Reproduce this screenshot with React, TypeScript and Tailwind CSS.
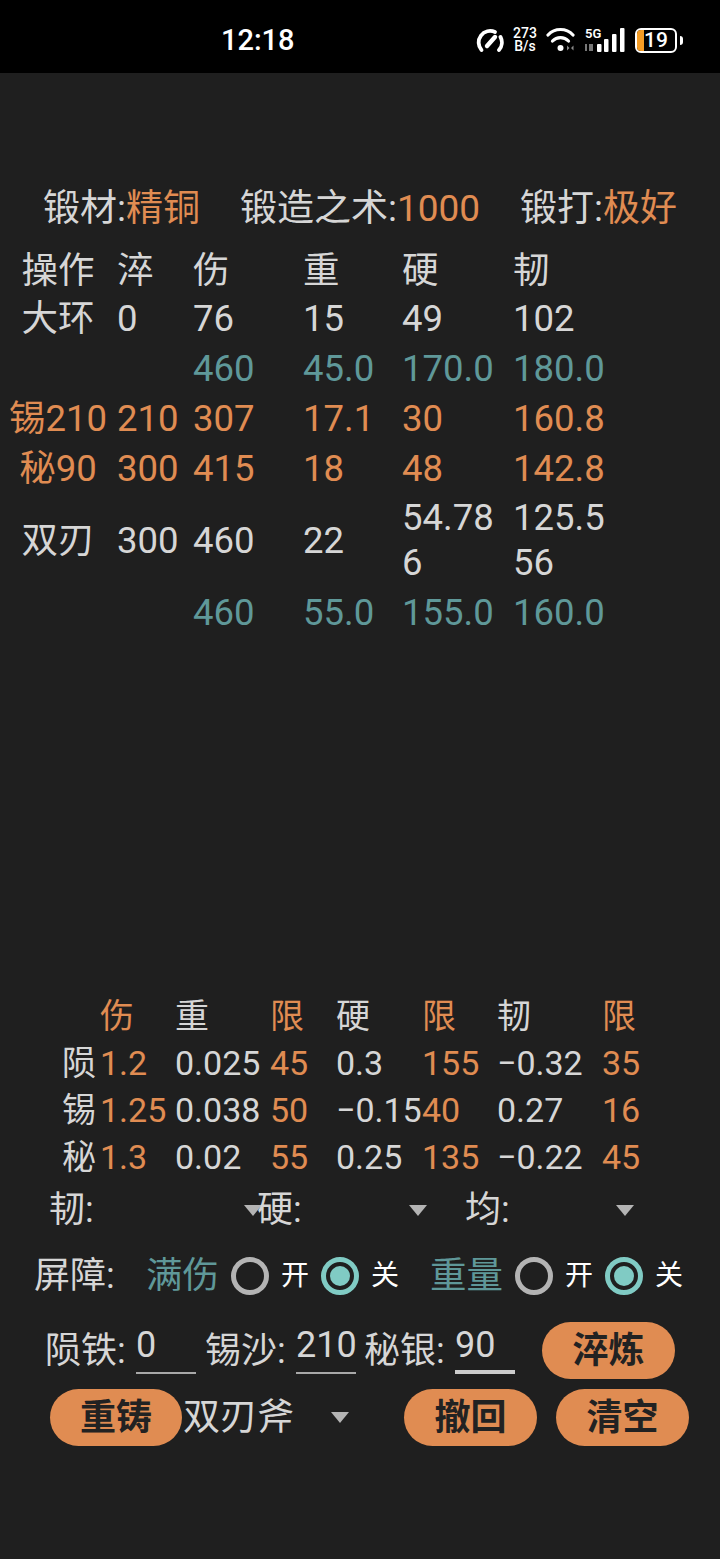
import React from 'react';

const FONT = "font-['Roboto','Noto_Sans_CJK_SC',sans-serif]";
const ORANGE = 'text-[#e08c52]';
const TEAL = 'text-[#5f9899]';

type Row = { cells: string[]; tone: string; h: string };

const forgeRows: Row[] = [
    { cells: ['操作', '淬', '伤', '重', '硬', '韧'], tone: 'text-[#d6d6d6]', h: 'h-[48px]' },
    { cells: ['大环', '0', '76', '15', '49', '102'], tone: 'text-[#d6d6d6]', h: 'h-[49px]' },
    { cells: ['', '', '460', '45.0', '170.0', '180.0'], tone: TEAL, h: 'h-[50px]' },
    { cells: ['锡210', '210', '307', '17.1', '30', '160.8'], tone: ORANGE, h: 'h-[50px]' },
    { cells: ['秘90', '300', '415', '18', '48', '142.8'], tone: ORANGE, h: 'h-[50px]' },
    { cells: ['双刃', '300', '460', '22', '54.786', '125.556'], tone: 'text-[#d6d6d6]', h: 'h-[94px]' },
    { cells: ['', '', '460', '55.0', '155.0', '160.0'], tone: TEAL, h: 'h-[50px]' },
];

const metals = [
    ['', '伤', '重', '限', '硬', '限', '韧', '限'],
    ['陨', '1.2', '0.025', '45', '0.3', '155', '−0.32', '35'],
    ['锡', '1.25', '0.038', '50', '−0.15', '40', '0.27', '16'],
    ['秘', '1.3', '0.02', '55', '0.25', '135', '−0.22', '45'],
];

const Caret = () => (
    <svg width="18" height="11" viewBox="0 0 18 11" className="shrink-0">
        <polygon points="0,0 18,0 9,11" fill="#b4b4b4" />
    </svg>
);

const Radio = ({ on }: { on?: boolean }) => (
    <span className={`flex h-[38px] w-[38px] shrink-0 items-center justify-center rounded-full border-[5px] ${on ? 'border-[#80cbc4]' : 'border-[#b4b4b4]'}`}>
        {on && <span className="h-[20px] w-[20px] shrink-0 rounded-full bg-[#80cbc4]" />}
    </span>
);

const Shield = ({ label, ml }: { label: string; ml: string }) => (
    <div className={`flex items-center ${ml}`}>
        <span className={`${TEAL} mr-[12px] text-[36.5px]`}>{label}</span>
        <Radio />
        <span className="ml-[12px] mr-[12px] text-[28px] text-white">开</span>
        <Radio on />
        <span className="ml-[12px] text-[28px] text-white">关</span>
    </div>
);

const PillButton = ({ label, className = '' }: { label: string; className?: string }) => (
    <button className={`flex h-[57px] w-[133px] shrink-0 items-center justify-center rounded-full bg-[#e08c52] text-[36px] font-bold text-[#222222] ${className}`}>
        {label}
    </button>
);

const Field = ({ label, value, thick, className = '' }: { label: string; value: string; thick?: boolean; className?: string }) => (
    <div className={`flex items-center ${className}`}>
        <span className="w-[91px] shrink-0 text-[36px]">{label}</span>
        <span className={`h-[47px] w-[60px] shrink-0 text-[36px] leading-[36px] ${thick ? 'border-b-[4px] border-[#cccccc]' : 'border-b-2 border-[#a8a8a8]'}`}>
            {value}
        </span>
    </div>
);

const StatusIcons = () => (
    <div className="flex items-center text-white">
        <svg width="28" height="25" viewBox="0 0 28 25" fill="none" stroke="white" strokeWidth="3.8" strokeLinecap="round">
            <path d="M5.5 22 A11.5 11.5 0 0 1 19 4" />
            <path d="M24.5 9 A11.5 11.5 0 0 1 23 22" />
            <path d="M11 18 L19 9" strokeWidth="4.4" />
        </svg>
        <div className="ml-[8px] flex w-[26px] flex-col items-center text-[14px] font-medium leading-[13px]">
            <span>273</span>
            <span>B/s</span>
        </div>
        <svg width="30" height="26" viewBox="0 0 30 26" fill="none" stroke="white" strokeWidth="3.2" strokeLinecap="round" className="ml-[8px]">
            <path d="M2 8 A17 17 0 0 1 27 8" />
            <path d="M6.5 14 A11 11 0 0 1 22.5 14" />
            <circle cx="14.5" cy="21" r="3" fill="white" stroke="none" />
            <path d="M23.5 21 l-2.5 -2.5 v5 z M25 21 l2.5 -2.5 v5 z" fill="#8a8a8a" stroke="none" />
        </svg>
        <div className="relative ml-[9px] h-[26px] w-[42px]">
            <span className="absolute left-0 top-0 text-[13px] font-semibold leading-[14px]">5G</span>
            <svg width="42" height="26" viewBox="0 0 42 26" className="absolute left-0 top-0">
                <rect x="0" y="17" width="2" height="7" fill="#777" />
                <rect x="4" y="17" width="4" height="7" fill="#777" />
                <rect x="12" y="17" width="4.5" height="8" rx="1" fill="white" />
                <rect x="19" y="12" width="4.5" height="13" rx="1" fill="white" />
                <rect x="27" y="7" width="4.5" height="18" rx="1" fill="white" />
                <rect x="35" y="1" width="4.5" height="24" rx="1" fill="white" />
            </svg>
        </div>
        <div className="ml-[8px] flex items-center">
            <div className="relative flex h-[25px] w-[42px] items-center justify-center overflow-hidden rounded-[6px] border-2 border-white">
                <span className="absolute bottom-0 left-0 top-0 w-[7px] bg-[#f39c25]" />
                <span className="relative text-[21px] font-medium leading-none">19</span>
            </div>
            <span className="ml-[3px] h-[9px] w-[3px] rounded-r-sm bg-white" />
        </div>
    </div>
);

export default function App() {
    return (
        <div className={`${FONT} min-h-[1559px] w-[720px] bg-[#1f1f1f] text-[#d6d6d6]`}>
            <header className="flex h-[73px] items-center bg-black pl-[221px] pr-[37px] pt-[7px]">
                <span className="mt-[2px] text-[29px] font-medium text-white">12:18</span>
                <div className="ml-auto">
                    <StatusIcons />
                </div>
            </header>

            <main className="flex flex-col">
                <div className="mt-[111px] flex h-[50px] items-center pl-[43px] text-[37px]">
                    <span className="w-[197px]">锻材:<span className={ORANGE}>精铜</span></span>
                    <span className="w-[280px]">锻造之术:<span className={ORANGE}>1000</span></span>
                    <span>锻打:<span className={ORANGE}>极好</span></span>
                </div>

                <div className="mt-[12px] flex flex-col pl-[9px] text-[36.5px] leading-[45px]">
                    {forgeRows.map((row, i) => (
                        <div key={i} className={`grid ${row.h} grid-cols-[108px_76px_110px_99px_111px_100px] items-center ${row.tone}`}>
                            {row.cells.map((cell, j) => (
                                <span key={j} className={j === 0 ? 'whitespace-nowrap pr-[10px] text-center' : j === 4 ? 'break-all pr-[8px]' : 'break-all'}>
                                    {cell}
                                </span>
                            ))}
                        </div>
                    ))}
                </div>

                <div className="mt-[354px] flex flex-col pl-[62px] text-[34px]">
                    {metals.map((row, i) => (
                        <div key={i} className="grid h-[47px] grid-cols-[38px_75px_95px_66px_86px_75px_105px_40px] items-center">
                            {row.map((cell, j) => (
                                <span key={j} className={`whitespace-nowrap ${j === 1 || j === 3 || j === 5 || j === 7 ? ORANGE : ''}`}>
                                    {cell}
                                </span>
                            ))}
                        </div>
                    ))}
                </div>

                <div className="mt-[6px] flex h-[50px] items-center pl-[49px] text-[36px]">
                    <div className="flex w-[208px] items-center">
                        <span>韧:</span>
                        <span className="ml-auto mr-[-5px]"><Caret /></span>
                    </div>
                    <div className="flex w-[208px] items-center">
                        <span>硬:</span>
                        <span className="ml-auto mr-[38px]"><Caret /></span>
                    </div>
                    <div className="flex w-[208px] items-center">
                        <span>均:</span>
                        <span className="ml-auto mr-[39px]"><Caret /></span>
                    </div>
                </div>

                <div className="mt-[16px] flex h-[50px] items-center pl-[34px]">
                    <span className="w-[112px] text-[36px]">屏障:</span>
                    <Shield label="满伤" ml="" />
                    <Shield label="重量" ml="ml-[31px]" />
                </div>

                <div className="mt-[21px] flex h-[57px] items-center pl-[45px]">
                    <Field label="陨铁:" value="0" />
                    <Field label="锡沙:" value="210" className="ml-[9px]" />
                    <Field label="秘银:" value="90" thick className="ml-[8px]" />
                    <PillButton label="淬炼" className="ml-[27px]" />
                </div>

                <div className="mt-[10px] flex h-[57px] items-center pl-[50px]">
                    <PillButton label="重铸" className="!w-[132px]" />
                    <span className="ml-[1px] w-[148px] text-[37px]">双刃斧</span>
                    <Caret />
                    <PillButton label="撤回" className="ml-[55px]" />
                    <PillButton label="清空" className="ml-[19px]" />
                </div>
            </main>
        </div>
    );
}
